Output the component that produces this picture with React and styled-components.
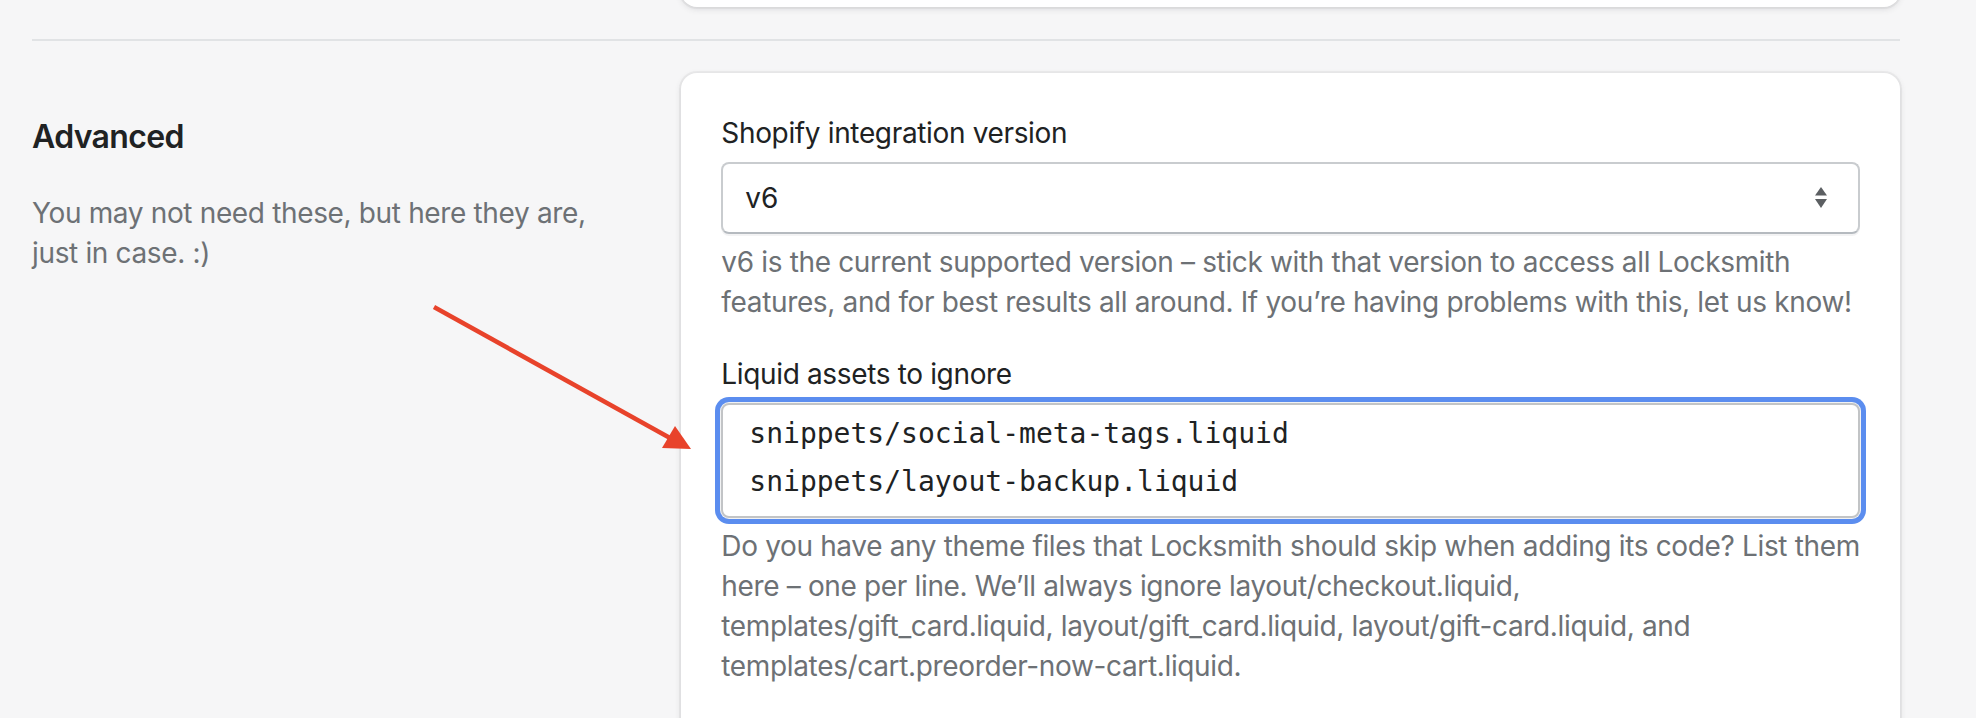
import styled, { createGlobalStyle } from 'styled-components';

const GlobalStyle = createGlobalStyle`
    html, body {
        margin: 0;
        padding: 0;
        background: #f6f6f7;
        font-family: Inter, "Open Sans", "Liberation Sans", sans-serif;
        -webkit-font-smoothing: antialiased;
    }
`;

const Page = styled.div`
    position: relative;
    margin-top: -40px;
    padding: 0 76px 0 32px;
    overflow: hidden;
`;

const Section = styled.div`
    display: flex;
    gap: 40px;
    align-items: flex-start;
    ${props => props.divided && `
        margin-top: 32px;
        border-top: 2px solid #e1e3e5;
        padding-top: 32px;
    `}
`;

const Annotation = styled.div`
    flex: 1 1 480px;
    padding-top: 40px;
`;

const Content = styled.div`
    flex: 2 2 960px;
    min-width: 0;
`;

const Card = styled.div`
    background: #fff;
    border-radius: 16px;
    box-shadow: 0 0 0 2px rgba(63, 63, 68, 0.05), 0 2px 6px 0 rgba(63, 63, 68, 0.15);
    padding: 40px;
    min-height: ${props => props.minHeight || 'auto'};
    box-sizing: border-box;
    ${props => props.flat && `
        padding: 0;
        border-top-left-radius: 0;
        border-top-right-radius: 0;
    `}
`;

const Heading = styled.h2`
    margin: 0;
    font-size: 32px;
    line-height: 48px;
    font-weight: 600;
    color: #202223;
    letter-spacing: -0.65px;
`;

const Subdued = styled.p`
    margin: 32px 0 0;
    font-size: 28px;
    line-height: 40px;
    color: #6d7175;
    letter-spacing: -0.35px;
`;

const Field = styled.div`
    & + & {
        margin-top: 32px;
    }
`;

const Label = styled.label`
    display: block;
    margin-bottom: 9px;
    font-size: 28px;
    line-height: 40px;
    color: #202223;
    letter-spacing: -0.35px;
`;

const SelectBox = styled.div`
    display: flex;
    align-items: center;
    justify-content: space-between;
    height: 72px;
    box-sizing: border-box;
    padding: 0 30px 0 22px;
    background: #fff;
    border: 2px solid #c9cccf;
    border-bottom-color: #b5babf;
    border-radius: 8px;
    box-shadow: 0 2px 0 rgba(22, 29, 37, 0.05);
    font-size: 28px;
    color: #202223;
`;

const TextArea = styled.textarea`
    display: block;
    width: 100%;
    height: 115px;
    box-sizing: border-box;
    margin: 0;
    padding: 5px 24px 0 26px;
    border: 2px solid #c2c4c6;
    border-radius: 8px;
    box-shadow: 0 0 0 1px #f1f2f3, 0 0 0 6px #5b8def;
    resize: none;
    overflow: hidden;
    outline: none;
    font-family: "DejaVu Sans Mono", "Liberation Mono", monospace;
    font-size: 28px;
    line-height: 48px;
    color: #202223;
    background: #fff;
`;

const HelpText = styled.div`
    margin-top: 8px;
    font-size: 28px;
    line-height: 40px;
    color: #6d7175;
    letter-spacing: -0.35px;
    white-space: nowrap;
`;

const Arrow = styled.svg`
    position: absolute;
    left: 420px;
    top: 330px;
    pointer-events: none;
`;

function SelectArrows() {
    return (
        <svg width="14" height="22" viewBox="0 0 14 22">
            <path d="M7 0 L13 8.5 L1 8.5 Z" fill="#5c5f62" />
            <path d="M1 12 L13 12 L7 21 Z" fill="#5c5f62" />
        </svg>
    );
}

export default function App() {
    return (
        <>
            <GlobalStyle />
            <Page>
                <Section>
                    <Annotation />
                    <Content>
                        <Card flat minHeight="47px" />
                    </Content>
                </Section>
                <Section divided>
                    <Annotation>
                        <Heading>Advanced</Heading>
                        <Subdued>You may not need these, but here they are,<br />just in case. :)</Subdued>
                    </Annotation>
                    <Content>
                        <Card minHeight="700px">
                            <Field>
                                <Label>Shopify integration version</Label>
                                <SelectBox>
                                    <span>v6</span>
                                    <SelectArrows />
                                </SelectBox>
                                <HelpText>
                                    v6 is the current supported version – stick with that version to access all Locksmith<br />
                                    features, and for best results all around. If you’re having problems with this, let us know!
                                </HelpText>
                            </Field>
                            <Field>
                                <Label>Liquid assets to ignore</Label>
                                <TextArea
                                    readOnly
                                    defaultValue={'snippets/social-meta-tags.liquid\nsnippets/layout-backup.liquid'}
                                />
                                <HelpText>
                                    Do you have any theme files that Locksmith should skip when adding its code? List them<br />
                                    here – one per line. We’ll always ignore layout/checkout.liquid,<br />
                                    templates/gift_card.liquid, layout/gift_card.liquid, layout/gift-card.liquid, and<br />
                                    templates/cart.preorder-now-cart.liquid.
                                </HelpText>
                            </Field>
                        </Card>
                    </Content>
                </Section>
                <Arrow width="280" height="160" viewBox="0 0 280 160">
                    <line x1="14" y1="17" x2="250" y2="148" stroke="#e8432b" strokeWidth="4.5" />
                    <polygon points="255,136 242,158 271,159" fill="#e8432b" />
                </Arrow>
            </Page>
        </>
    );
}
